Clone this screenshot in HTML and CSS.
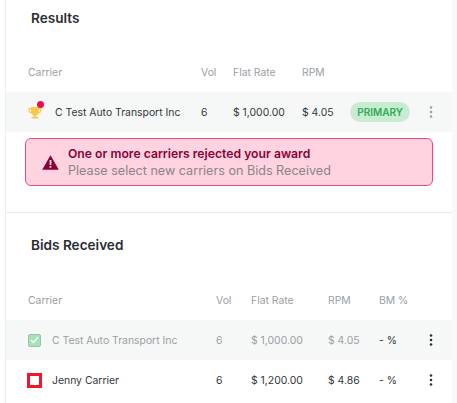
FILE: index.html
```html
<!DOCTYPE html>
<html lang="en">
<head>
<meta charset="utf-8">
<title>Results</title>
<link rel="stylesheet" href="styles.css">
</head>
<body>
<main class="panel">
  <section class="results">
    <h2 class="title">Results</h2>
    <div class="row head cols-a"><span class="first">Carrier</span><span>Vol</span><span>Flat Rate</span><span>RPM</span></div>
    <div class="row body tint cols-a">
      <span class="first carrier">
        <span class="trophy"><svg width="14" height="13" viewBox="0 0 14 13"><path fill="#fbc748" d="M0.500 1h2.500V0h8v1h2.500v2.200c0 1.800-1.300 3-3.100 3.200-.5 1-1.300 1.600-2.200 1.800v1.800h2.300v1.500H3.500V10h2.300V8.200c-.9-.2-1.700-.8-2.200-1.800C1.800 6.200.5 5 .5 3.200zM1.700 2.200v1c0 .9.600 1.600 1.500 1.900-.1-.4-.2-1.200-.2-2.900zM12.300 2.200H11c0 1.700-.1 2.500-.2 2.900.9-.3 1.500-1 1.500-1.900z" fill-rule="evenodd"/></svg><i class="dot"></i></span>
        C Test Auto Transport Inc
      </span>
      <span>6</span><span>$ 1,000.00</span><span>$ 4.05</span>
      <span class="pill">PRIMARY</span>
      <svg class="more pale" width="4" height="12" viewBox="0 0 4 12"><circle cx="2" cy="1.500" r="1.300"/><circle cx="2" cy="6" r="1.300"/><circle cx="2" cy="10.500" r="1.300"/></svg>
    </div>
    <div class="alert">
      <svg width="17" height="15" viewBox="0 0 17 15"><path fill="#8b0037" fill-rule="evenodd" d="M8.500 0.300 16.800 14.700H.2zM7.600 5v5h1.800V5zM7.600 11v1.800h1.800V11z"/></svg>
      <div><p class="alert-title">One or more carriers rejected your award</p><p class="alert-text">Please select new carriers on Bids Received</p></div>
    </div>
  </section>
  <section class="bids">
    <h2 class="title">Bids Received</h2>
    <div class="row head cols-b"><span class="first">Carrier</span><span>Vol</span><span>Flat Rate</span><span>RPM</span><span>BM %</span></div>
    <div class="row body tint muted cols-b">
      <span class="first carrier"><span class="check"><svg width="9" height="8" viewBox="0 0 9 8"><path d="M1 4l2.500 2.500L8 1.200" fill="none" stroke="#fff" stroke-width="1.500"/></svg></span>C Test Auto Transport Inc</span>
      <span>6</span><span>$ 1,000.00</span><span>$ 4.05</span><span class="plain">- %</span>
      <svg class="more" width="4" height="12" viewBox="0 0 4 12"><circle cx="2" cy="1.500" r="1.300"/><circle cx="2" cy="6" r="1.300"/><circle cx="2" cy="10.500" r="1.300"/></svg>
    </div>
    <div class="row body cols-b">
      <span class="first carrier"><span class="box"></span>Jenny Carrier</span>
      <span>6</span><span>$ 1,200.00</span><span>$ 4.86</span><span>- %</span>
      <svg class="more" width="4" height="12" viewBox="0 0 4 12"><circle cx="2" cy="1.500" r="1.300"/><circle cx="2" cy="6" r="1.300"/><circle cx="2" cy="10.500" r="1.300"/></svg>
    </div>
  </section>
</main>
</body>
</html>
```
FILE: styles.css
```css
html, body { margin: 0; height: 100%; overflow: hidden; }
body { background: #f9f9f9; border-left: 5px solid #fff; box-sizing: border-box; font-family: Inter, "Liberation Sans", sans-serif; color: #33373d; }
.panel { width: 447px; height: 403px; background: #fff; border-left: 1px solid #eeeeee; box-sizing: border-box; overflow: hidden; }
.results { height: 213px; box-sizing: border-box; border-bottom: 1px solid #ebebeb; padding-top: 10px; }
.bids { padding-top: 24px; }
.title { margin: 0 0 0 25px; font-size: 13.600px; line-height: 16px; font-weight: 600; color: #2b2e33; }
.row { display: grid; align-items: center; font-size: 10.400px; padding-left: 22px; }
.cols-a { grid-template-columns: 173px 32px 69px 48px 79px 1fr; }
.cols-b { grid-template-columns: 188px 35px 77px 51px 50px 1fr; }
.head { color: #9aa0a5; height: 20px; }
.results .head { margin-top: 36px; }
.bids .head { margin-top: 37px; }
.body { height: 40px; }
.results .body { margin-top: 10px; }
.bids .head + .body { margin-top: 10px; }
.tint { background: #f6f8f8; }
.muted { color: #9aa0a5; }
.muted .plain { color: #33373d; }
.carrier { display: flex; align-items: center; }
.trophy { position: relative; width: 27px; height: 13px; display: block; margin-top: 3px; }
.trophy svg { display: block; }
.dot { position: absolute; left: 9px; top: -6px; width: 7px; height: 7px; border-radius: 50%; background: #ee0a4b; }
.check { width: 13px; height: 13px; margin-right: 11px; box-sizing: border-box; border: 1px solid #9fc0a6; border-radius: 2px; background: #a5e2b5; display: flex; align-items: center; justify-content: center; }
.box { width: 15px; height: 15px; margin-left: -1px; margin-right: 10px; box-sizing: border-box; border: 3px solid #f5142a; background: #fff; }
.pill { justify-self: start; height: 20px; width: 60px; border-radius: 10px; background: #c8ebd2; color: #2eab55; font-weight: 600; font-size: 10px; display: flex; align-items: center; justify-content: center; }
.more { justify-self: start; fill: #2e3238; }
.pale { fill: #9da2a6; }
.alert { margin: 6px 19px 0 19px; height: 48px; box-sizing: border-box; border: 1px solid #ee4a78; border-radius: 6px; background: #ffd3e0; display: flex; align-items: center; gap: 9px; padding-left: 16px; }
.alert p { margin: 0; line-height: 17px; }
.alert-title { font-size: 12.200px; font-weight: 600; color: #8b0037; }
.alert-text { font-size: 12.600px; color: #8a8589; }
```
